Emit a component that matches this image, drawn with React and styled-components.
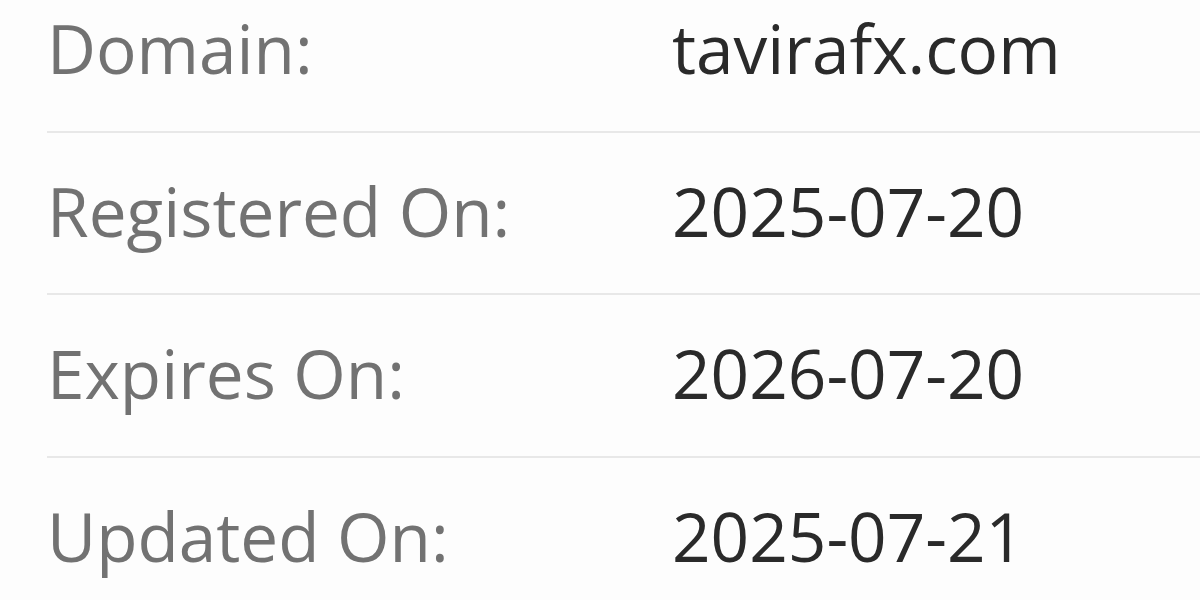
import React from "react";
import styled, { createGlobalStyle } from "styled-components";

const GlobalStyle = createGlobalStyle`
  body {
    margin: 0;
    background: #fdfdfd;
    font-family: "Open Sans", "Noto Sans", sans-serif;
  }
`;

// css
const Table = styled.div`
  padding-left: 47px;
  overflow: hidden;
  height: 600px;
`;
const Row = styled.div`
  display: grid;
  grid-template-columns: 625px 1fr;
  align-items: center;
  padding: ${(props) => (props.first ? "2px" : "32px")} 0 36.5px;
  border-top: ${(props) => (props.first ? "none" : "2px solid #e8e8e8")};
`;
const Label = styled.span`
  font-size: 67.5px;
  line-height: 92px;
  color: #727272;
  white-space: nowrap;
`;
const Value = styled.span`
  font-size: 67.5px;
  line-height: 92px;
  color: #2a2a2a;
  white-space: nowrap;
`;

const rows = [
  ["Domain:", "tavirafx.com"],
  ["Registered On:", "2025-07-20"],
  ["Expires On:", "2026-07-20"],
  ["Updated On:", "2025-07-21"],
];

export default function App() {
  return (
    <>
      <GlobalStyle />
      <Table>
        {rows.map(([label, value], i) => (
          <Row key={label} first={i === 0}>
            <Label>{label}</Label>
            <Value>{value}</Value>
          </Row>
        ))}
      </Table>
    </>
  );
}
